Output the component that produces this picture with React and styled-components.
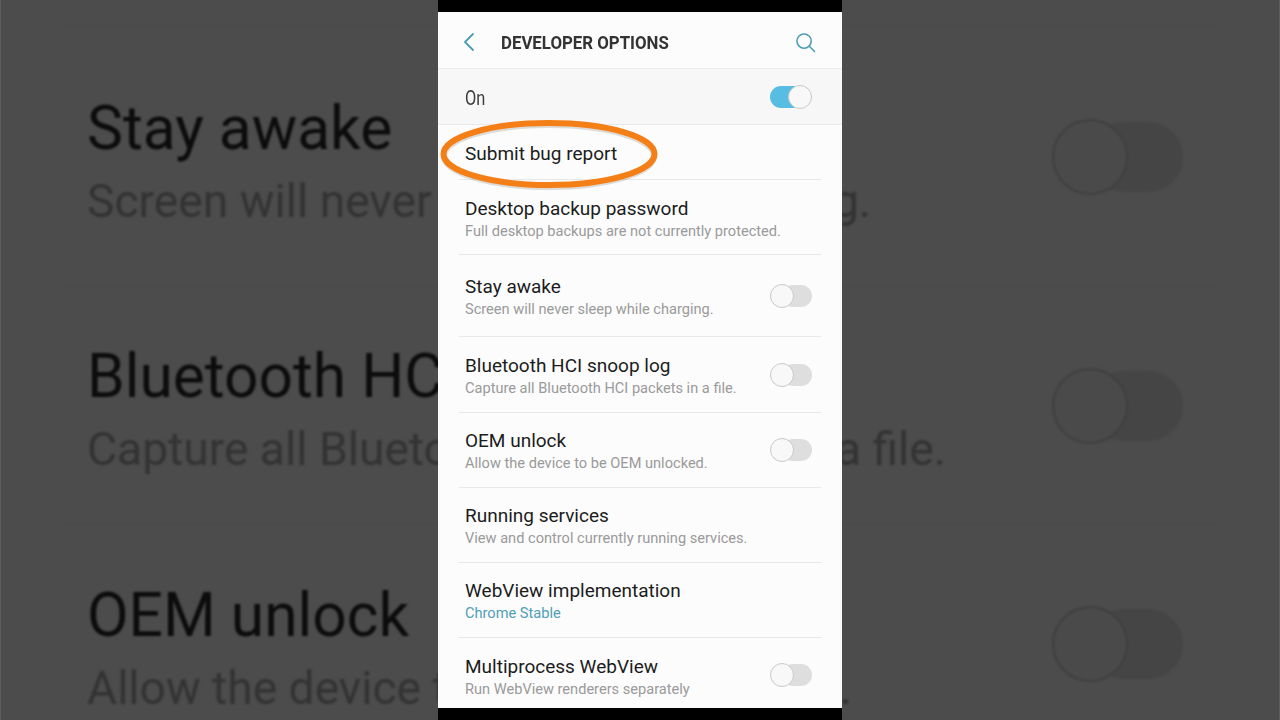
import React from 'react';
import styled, { createGlobalStyle } from 'styled-components';

const GlobalStyle = createGlobalStyle`
  html, body {
    margin: 0;
    padding: 0;
    background: #4c4c4c;
    font-family: Roboto, "Liberation Sans", sans-serif;
  }
`;

const Stage = styled.div`
  display: grid;
  grid-template-columns: 438px 404px 438px;
  width: 1280px;
  height: 720px;
  overflow: hidden;
  background: #4c4c4c;
`;

// Blurred, zoomed copy of the list on both sides of the phone
const Pane = styled.div`
  display: flex;
  flex-direction: column;
  height: 720px;
  overflow: hidden;
  box-sizing: border-box;
  padding: 26px 0 0 0;
  ${({ $side }) => ($side === 'left'
    ? 'padding-left: 65px; border-left: 1px solid #5c5c5c; margin-left: 0;'
    : 'padding-right: 64px; border-right: 1px solid #5c5c5c;')}
`;

const BackdropRow = styled.div`
  display: flex;
  flex-shrink: 0;
  height: ${({ $height }) => $height}px;
  box-sizing: border-box;
  border-top: 1px solid #474747;
  filter: blur(0.9px);
`;

const BackdropText = styled.div`
  padding: ${({ $top }) => $top}px 0 0 21px;
`;

const BackdropTitle = styled.div`
  font-size: 60.5px;
  line-height: 74px;
  color: #0c0c0c;
  white-space: nowrap;
`;

const BackdropSub = styled.div`
  margin-top: 8px;
  font-size: 46.2px;
  line-height: 54px;
  color: #333;
  white-space: nowrap;
`;

const BackdropTail = styled.div`
  display: flex;
  justify-content: flex-end;
  flex-shrink: 0;
  width: ${({ $width }) => $width}px;
  height: 54px;
  margin-top: ${({ $top }) => $top}px;
  font-size: 46.2px;
  line-height: 54px;
  color: #333;
  white-space: nowrap;
  overflow: hidden;
`;

const BackdropToggle = styled.div`
  position: relative;
  flex-shrink: 0;
  width: 131px;
  height: 76px;
  margin: ${({ $top }) => $top}px 32px 0 auto;
`;

const BackdropTrack = styled.div`
  position: absolute;
  right: 0;
  top: 3px;
  width: 94px;
  height: 70px;
  border-radius: 35px;
  background: #454545;
`;

const BackdropThumb = styled.div`
  position: absolute;
  left: 0;
  top: 0;
  width: 76px;
  height: 76px;
  box-sizing: border-box;
  border-radius: 50%;
  border: 2px solid #3f3f3f;
  background: #4a4a4a;
`;

const Phone = styled.div`
  position: relative;
  display: flex;
  flex-direction: column;
  height: 720px;
  box-sizing: border-box;
  padding: 12px 0;
  background: #000;
`;

const Screen = styled.div`
  flex: 1;
  display: flex;
  flex-direction: column;
  overflow: hidden;
  background: #fcfcfc;
`;

const Header = styled.header`
  display: flex;
  align-items: center;
  height: 57px;
  flex-shrink: 0;
  box-sizing: border-box;
  padding: 4px 26px 0 24px;
  border-bottom: 1px solid #ececec;
`;

const HeaderTitle = styled.h1`
  flex: 1;
  margin: 1px 0 0 25px;
  font-size: 19px;
  font-weight: 700;
  color: #333;
  white-space: nowrap;
  transform: scaleX(0.885);
  transform-origin: left center;
`;

const MasterRow = styled.div`
  display: flex;
  align-items: center;
  justify-content: space-between;
  height: 56px;
  flex-shrink: 0;
  box-sizing: border-box;
  padding: 0 30px 0 27px;
  background: #f7f7f7;
  border-bottom: 1px solid #e9e9e9;
`;

const MasterLabel = styled.span`
  margin-top: 2px;
  font-size: 20px;
  color: #3c3c3c;
  transform: scaleX(0.82);
  transform-origin: left center;
`;

const List = styled.div`
  display: flex;
  flex-direction: column;
  padding: 0 21px;
`;

const Row = styled.div`
  display: flex;
  align-items: center;
  justify-content: space-between;
  flex-shrink: 0;
  height: ${({ $height }) => $height}px;
  box-sizing: border-box;
  padding: 0 9px 0 6px;
  border-bottom: ${({ $last }) => ($last ? 'none' : '1px solid #e8e8e8')};
`;

const RowText = styled.div`
  display: flex;
  flex-direction: column;
  margin-top: ${({ $nudge }) => $nudge}px;
`;

const RowTitle = styled.div`
  font-size: 19px;
  line-height: 24px;
  color: #1c1c1c;
  white-space: nowrap;
`;

const RowSub = styled.div`
  font-size: 14.6px;
  line-height: 20px;
  color: ${({ $accent }) => ($accent ? '#4f9fb5' : '#9a9a9a')};
  white-space: nowrap;
`;

const Switch = styled.div`
  position: relative;
  width: 42px;
  height: 24px;
  flex-shrink: 0;
`;

const SwitchTrack = styled.div`
  position: absolute;
  right: 0;
  top: 1px;
  width: 30px;
  height: 22px;
  border-radius: 11px;
  background: ${({ $on }) => ($on ? '#57bde3' : '#dedede')};
  ${({ $on }) => $on && 'left: 0; right: auto; width: 34px;'}
`;

const SwitchThumb = styled.div`
  position: absolute;
  top: 0;
  ${({ $on }) => ($on ? 'right: 0;' : 'left: 0;')}
  width: 24px;
  height: 24px;
  box-sizing: border-box;
  border-radius: 50%;
  border: 1px solid #c9c9c9;
  background: #f8f8f8;
`;

const Callout = styled.svg`
  position: absolute;
  left: 0;
  top: 112px;
  width: 230px;
  height: 84px;
  pointer-events: none;
`;

const Toggle = ({ on }) => (
  <Switch>
    <SwitchTrack $on={on} />
    <SwitchThumb $on={on} />
  </Switch>
);

const backdrop = [
  { title: 'Stay awake', sub: 'Screen will never s', tail: 'ng.', tailWidth: 29, height: 259, top: 65, toggleTop: 92 },
  { title: 'Bluetooth HCI', sub: 'Capture all Bluetoo', tail: 'a file.', tailWidth: 104, height: 239, top: 54, toggleTop: 82 },
  { title: 'OEM unlock', sub: 'Allow the device to', tail: '.', tailWidth: 10, height: 196, top: 54, toggleTop: 81 }
];

const items = [
  { title: 'Submit bug report', height: 55, nudge: 4 },
  { title: 'Desktop backup password', sub: 'Full desktop backups are not currently protected.', height: 75, nudge: 4 },
  { title: 'Stay awake', sub: 'Screen will never sleep while charging.', toggle: true, height: 82, nudge: 3 },
  { title: 'Bluetooth HCI snoop log', sub: 'Capture all Bluetooth HCI packets in a file.', toggle: true, height: 76, nudge: 2 },
  { title: 'OEM unlock', sub: 'Allow the device to be OEM unlocked.', toggle: true, height: 75, nudge: 2 },
  { title: 'Running services', sub: 'View and control currently running services.', height: 75, nudge: 2 },
  { title: 'WebView implementation', sub: 'Chrome Stable', accent: true, height: 75, nudge: 2 },
  { title: 'Multiprocess WebView', sub: 'Run WebView renderers separately', toggle: true, height: 74, last: true, nudge: 4 }
];

export default function App () {
  return (
    <Stage>
      <GlobalStyle />
      <Pane $side='left'>
        {backdrop.map((row) => (
          <BackdropRow key={row.title} $height={row.height}>
            <BackdropText $top={row.top}>
              <BackdropTitle>{row.title}</BackdropTitle>
              <BackdropSub>{row.sub}</BackdropSub>
            </BackdropText>
          </BackdropRow>
        ))}
      </Pane>
      <Phone>
        <Screen>
          <Header>
            <svg width='14' height='20' viewBox='0 0 14 20' fill='none' stroke='#4a9db5' strokeWidth='1.8' strokeLinecap='round' strokeLinejoin='round'>
              <path d='M11 2 L3 10 L11 18' />
            </svg>
            <HeaderTitle>DEVELOPER OPTIONS</HeaderTitle>
            <svg width='21' height='21' viewBox='0 0 22 22' fill='none' stroke='#4a9db5' strokeWidth='1.6' strokeLinecap='round'>
              <circle cx='9.5' cy='9.5' r='7.5' />
              <path d='M15 15 L20.5 20.5' />
            </svg>
          </Header>
          <MasterRow>
            <MasterLabel>On</MasterLabel>
            <Toggle on />
          </MasterRow>
          <List>
            {items.map((item) => (
              <Row key={item.title} $height={item.height} $last={item.last}>
                <RowText $nudge={item.nudge}>
                  <RowTitle>{item.title}</RowTitle>
                  {item.sub && <RowSub $accent={item.accent}>{item.sub}</RowSub>}
                </RowText>
                {item.toggle && <Toggle />}
              </Row>
            ))}
          </List>
        </Screen>
        <Callout viewBox='0 0 230 84'>
          <ellipse cx='111' cy='44' rx='105' ry='31' fill='none' stroke='#6b5a40' strokeOpacity='0.2' strokeWidth='6' />
          <ellipse cx='111' cy='42' rx='105.5' ry='31' fill='none' stroke='#f47f17' strokeWidth='6' />
        </Callout>
      </Phone>
      <Pane $side='right'>
        {backdrop.map((row) => (
          <BackdropRow key={row.tail} $height={row.height}>
            <BackdropTail $width={row.tailWidth} $top={row.top + 82}>{row.tail}</BackdropTail>
            <BackdropToggle $top={row.toggleTop}>
              <BackdropTrack />
              <BackdropThumb />
            </BackdropToggle>
          </BackdropRow>
        ))}
      </Pane>
    </Stage>
  );
}
